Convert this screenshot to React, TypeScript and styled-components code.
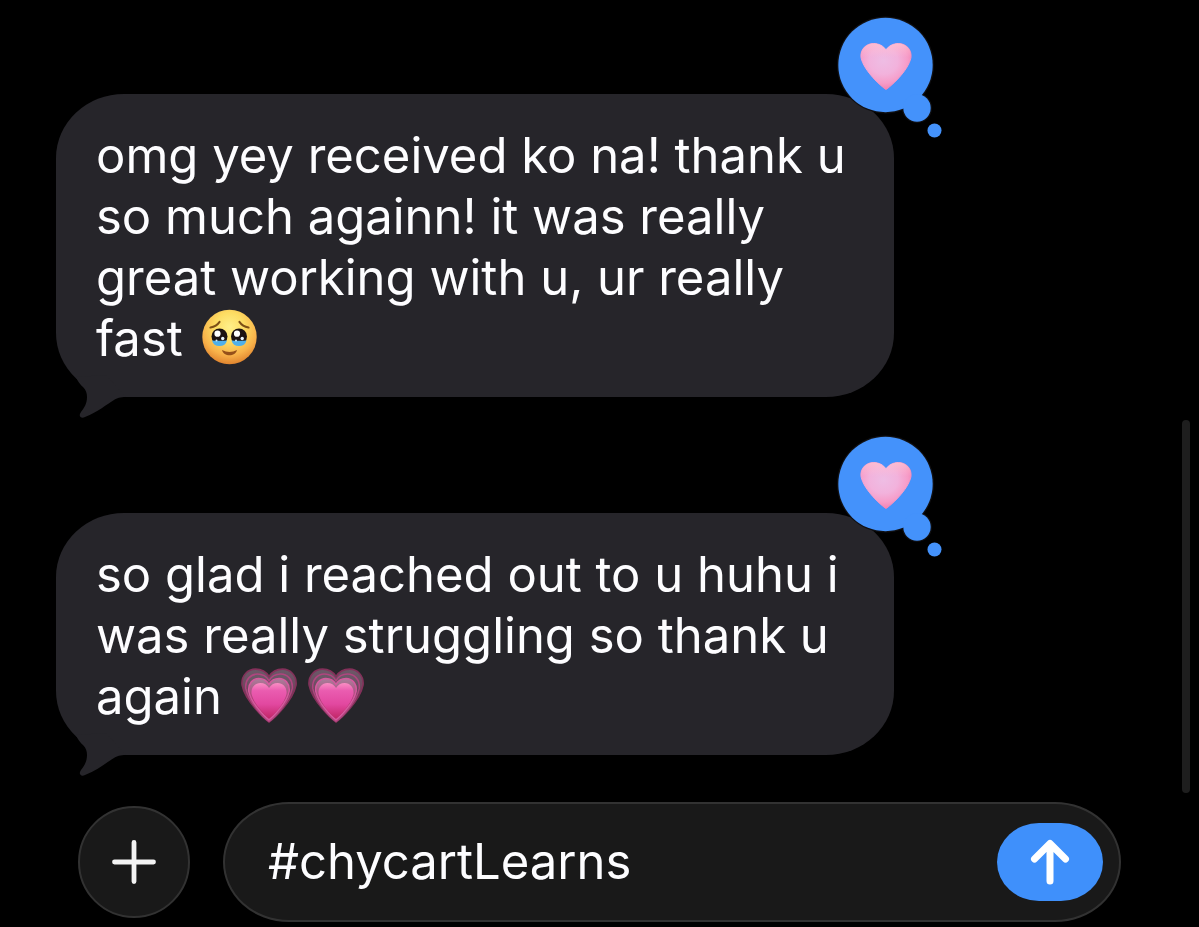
import React, { useState } from "react";
import styled, { createGlobalStyle } from "styled-components";

const GlobalStyle = createGlobalStyle`
  * { box-sizing: border-box; }
  html, body { margin: 0; background: #000; }
  body {
    font-family: Inter, "Liberation Sans", sans-serif;
    font-size: 49px;
    color: #fdfdff;
  }
`;

const Page = styled.main`
  position: relative;
  min-height: 100vh;
  padding: 94px 78px 6px 56px;
  overflow: hidden;
`;

const Thread = styled.ol`
  display: flex;
  flex-direction: column;
  align-items: flex-start;
  gap: 116px;
  margin: 0;
  padding: 0;
  list-style: none;
`;

const Bubble = styled.li`
  position: relative;
  width: 100%;
  max-width: 838px;
  padding: 31px 40px 28px 40px;
  border-radius: 68px / 64px;
  background: #26252a;
`;

const Message = styled.p`
  margin: 0;
  font-size: 49px;
  line-height: 61px;
`;

const Tail = styled.svg`
  position: absolute;
  left: 0;
  bottom: -22px;
`;

const Tapback = styled.svg`
  position: absolute;
  top: -79px;
  right: -50px;
`;

const Emoji = styled.svg`
  display: inline-block;
  vertical-align: -9px;
  margin: 0 6px 0 5px;
`;

const ScrollThumb = styled.div`
  position: absolute;
  top: 420px;
  right: 9px;
  width: 8px;
  height: 373px;
  border-radius: 4px;
  background: #1e1e1e;
`;

const Composer = styled.form`
  display: flex;
  align-items: center;
  gap: 33px;
  margin: 47px 0 0 22px;
`;

const AddButton = styled.button`
  display: grid;
  place-items: center;
  flex: none;
  width: 112px;
  height: 112px;
  padding: 0;
  border: 2px solid #323232;
  border-radius: 50%;
  background: #191919;
`;

const Field = styled.div`
  display: flex;
  align-items: center;
  flex: 1;
  min-width: 0;
  height: 120px;
  padding: 0 16px 0 43px;
  border: 2px solid #323232;
  border-radius: 66px / 60px;
  background: #191919;
`;

const TextInput = styled.input`
  flex: 1;
  min-width: 0;
  padding: 0;
  border: 0;
  outline: 0;
  background: transparent;
  color: #fdfdff;
  font-family: inherit;
  font-size: 49px;
  line-height: 64px;
`;

const SendButton = styled.button`
  display: grid;
  place-items: center;
  flex: none;
  width: 106px;
  height: 78px;
  padding: 0;
  border: 0;
  border-radius: 42px / 39px;
  background: #3f90fb;
`;

const HEART =
  "M25.5 46.5C21.5 44 3.5 28.5 0.5 14.5C-0.5 6 6 0.5 13 0.5C18.5 0.5 23 3 25.5 7C28 3 32.5 0.5 38 0.5C45 0.5 51.5 6 50.5 14.5C47.5 28.5 29.5 44 25.5 46.5Z";

function HeartTapback({ id }: { id: string }) {
  return (
    <Tapback width="108" height="124" viewBox="0 0 108 124" role="img" aria-label="Loved">
      <defs>
        <radialGradient id={id} cx="45%" cy="38%" r="64%">
          <stop offset="0" stopColor="#eebde4" />
          <stop offset="0.45" stopColor="#f2b2dc" />
          <stop offset="0.75" stopColor="#f69cc8" />
          <stop offset="1" stopColor="#f37fae" />
        </radialGradient>
        <linearGradient id={id + "-top"} x1="0" y1="0" x2="0" y2="1">
          <stop offset="0" stopColor="#ffc4d2" stopOpacity="0.8" />
          <stop offset="0.3" stopColor="#ffc0d8" stopOpacity="0" />
        </linearGradient>
      </defs>
      <g fill="#101013">
        <circle cx="49.5" cy="50" r="48.5" />
        <circle cx="81" cy="93" r="15" />
      </g>
      <g fill="#4492fb">
        <circle cx="49.5" cy="50" r="47.2" />
        <circle cx="81" cy="93" r="13.7" />
        <circle cx="98.5" cy="115.5" r="7" />
      </g>
      <g transform="translate(24.5 28)">
        <path d={HEART} fill={`url(#${id})`} stroke={`url(#${id})`} strokeWidth="1" strokeLinejoin="round" />
        <path d={HEART} fill={`url(#${id}-top)`} />
      </g>
    </Tapback>
  );
}

function BubbleTail() {
  return (
    <Tail width="72" height="72" viewBox="0 0 72 72" aria-hidden="true">
      <path
        d="M20 30C22 35 24 37 27 40C30 43 31 46 31 50C31 57 28 61 25 65C22 69 25 72 29 70C42 65 51 57 58 53C61 51 64 50 70 50L50 28Z"
        fill="#26252a"
      />
    </Tail>
  );
}

function TearyFace() {
  return (
    <Emoji width="56" height="56" viewBox="0 0 56 56" role="img" aria-label="face holding back tears">
      <defs>
        <radialGradient id="face" cx="50%" cy="32%" r="68%">
          <stop offset="0" stopColor="#fff08a" />
          <stop offset="0.4" stopColor="#fddc62" />
          <stop offset="0.75" stopColor="#f8b24a" />
          <stop offset="1" stopColor="#e0842f" />
        </radialGradient>
      </defs>
      <circle cx="27.5" cy="28" r="27.2" fill="url(#face)" />
      <path
        d="M8.5 18.5Q14.5 17.5 17.5 13M46.5 18.5Q40.5 17.5 37.5 13"
        stroke="#7d4f16"
        strokeWidth="2.2"
        fill="none"
        strokeLinecap="round"
      />
      {[17.5, 37].map((cx) => (
        <g key={cx}>
          <circle cx={cx} cy="27.5" r="8" fill="#1c1211" />
          <path
            d={`M${cx - 7.5} 31.5Q${cx} 32 ${cx + 7.5} 31.5Q${cx + 6} 37 ${cx} 37Q${cx - 6} 37 ${cx - 7.5} 31.5Z`}
            fill="#50b0ea"
          />
          <circle cx={cx - 2} cy="24.7" r="3.1" fill="#fff" />
          <circle cx={cx + 3.2} cy="29.5" r="1.7" fill="#e8f4fb" />
          <circle cx={cx - 3} cy="31.5" r="1" fill="#cfeeff" />
        </g>
      ))}
      <path d="M20 41Q27.5 45 35 41C33.5 48 21.5 48 20 41Z" fill="#95501a" />
    </Emoji>
  );
}

function GrowingHeart({ id }: { id: string }) {
  return (
    <Emoji width="56" height="56" viewBox="0 0 56 56" role="img" aria-label="growing heart">
      <defs>
        <linearGradient id={id} x1="0" y1="0" x2="0" y2="1">
          <stop offset="0" stopColor="#fa8fc4" />
          <stop offset="0.22" stopColor="#ea5cb0" />
          <stop offset="0.6" stopColor="#e248a0" />
          <stop offset="1" stopColor="#c22768" />
        </linearGradient>
        <linearGradient id={id + "-halo"} x1="0" y1="0" x2="0" y2="1">
          <stop offset="0" stopColor="#6a5a68" />
          <stop offset="0.45" stopColor="#74405c" />
          <stop offset="1" stopColor="#b82565" />
        </linearGradient>
        <linearGradient id={id + "-mid"} x1="0" y1="0" x2="0" y2="1">
          <stop offset="0" stopColor="#a8809a" />
          <stop offset="0.5" stopColor="#b23d78" />
          <stop offset="1" stopColor="#c22768" />
        </linearGradient>
      </defs>
      <path d={HEART} transform="translate(0.5 1.5) scale(1.08 1.15)" fill={`url(#${id}-halo)`} stroke="#84305a" strokeWidth="1.4" />
      <path d={HEART} transform="translate(4.3 6.5) scale(0.93 1.03)" fill={`url(#${id}-halo)`} stroke="#b0457f" strokeWidth="1.6" />
      <path d={HEART} transform="translate(7.3 11) scale(0.81 0.9)" fill={`url(#${id}-mid)`} stroke="#d65a9f" strokeWidth="1.8" />
      <path d={HEART} transform="translate(10.2 15.5) scale(0.7 0.77)" fill={`url(#${id})`} />
    </Emoji>
  );
}

export default function App() {
  const [draft, setDraft] = useState("#chycartLearns");
  return (
    <>
      <GlobalStyle />
      <Page>
        <Thread>
          <Bubble>
            <BubbleTail />
            <Message>
              omg yey received ko na! thank u so much againn! it was really great working with u, ur really fast{" "}
              <TearyFace />
            </Message>
            <HeartTapback id="love-a" />
          </Bubble>
          <Bubble>
            <BubbleTail />
            <Message>
              so glad i reached out to u huhu i was really struggling so thank u again <GrowingHeart id="grow-a" />
              <GrowingHeart id="grow-b" />
            </Message>
            <HeartTapback id="love-b" />
          </Bubble>
        </Thread>
        <Composer onSubmit={(e) => e.preventDefault()}>
          <AddButton type="button" aria-label="Add">
            <svg width="44" height="44" viewBox="0 0 44 44" aria-hidden="true">
              <path d="M22 2.5V41.5M2.5 22H41.5" stroke="#f3f3f3" strokeWidth="4.8" strokeLinecap="round" />
            </svg>
          </AddButton>
          <Field>
            <TextInput aria-label="Message" value={draft} onChange={(e) => setDraft(e.target.value)} />
            <SendButton type="submit" aria-label="Send">
              <svg width="40" height="46" viewBox="0 0 40 46" aria-hidden="true">
                <path
                  d="M20 42V5M4.5 20L20 4.5L35.5 20"
                  fill="none"
                  stroke="#fff"
                  strokeWidth="7"
                  strokeLinecap="round"
                  strokeLinejoin="round"
                />
              </svg>
            </SendButton>
          </Field>
        </Composer>
        <ScrollThumb />
      </Page>
    </>
  );
}
